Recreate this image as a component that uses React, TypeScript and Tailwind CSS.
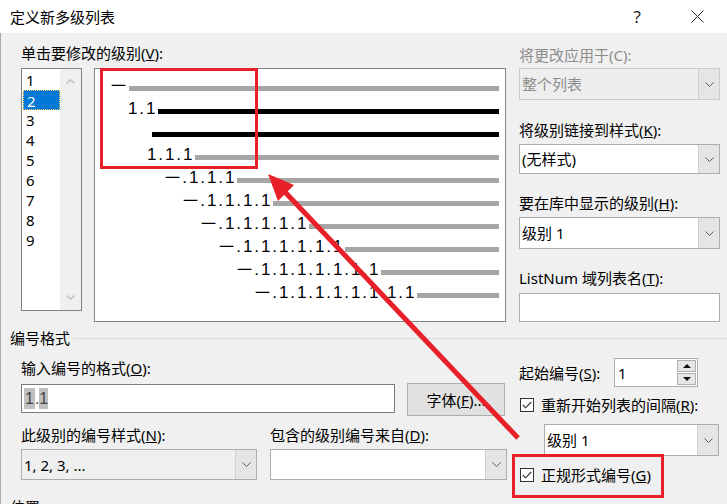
import React from "react";

const FONT = "font-['Noto_Sans','Noto_Sans_CJK_SC',sans-serif]";

// preview rows: left padding, label, bar colour
const previewRows = [
  { pl: "pl-[16px]", text: "一", bar: "bg-[#a6a6a6]" },
  { pl: "pl-[33px]", text: "1.1", bar: "bg-black" },
  { pl: "pl-[57px]", text: "", bar: "bg-black" },
  { pl: "pl-[52px]", text: "1.1.1", bar: "bg-[#a6a6a6]" },
  { pl: "pl-[70px]", text: "一.1.1.1", bar: "bg-[#a6a6a6]" },
  { pl: "pl-[88px]", text: "一.1.1.1.1", bar: "bg-[#a6a6a6]" },
  { pl: "pl-[106px]", text: "一.1.1.1.1.1", bar: "bg-[#a6a6a6]" },
  { pl: "pl-[124px]", text: "一.1.1.1.1.1.1", bar: "bg-[#a6a6a6]" },
  { pl: "pl-[142px]", text: "一.1.1.1.1.1.1.1", bar: "bg-[#a6a6a6]" },
  { pl: "pl-[160px]", text: "一.1.1.1.1.1.1.1.1", bar: "bg-[#a6a6a6]" },
];

function Chevron({ className = "stroke-[#5a5a5a]" }: { className?: string }) {
  return (
    <svg width="9" height="5" viewBox="0 0 9 5" className={className} fill="none">
      <polyline points="0.5,0.5 4.5,4.5 8.5,0.5" strokeWidth="1" />
    </svg>
  );
}

function Combo({
  value,
  disabled,
  white = true,
  className,
}: {
  value: string;
  disabled?: boolean;
  white?: boolean;
  className: string;
}) {
  return (
    <div
      className={`flex border ${disabled ? "border-[#cccccc] bg-[#eeeeee]" : "border-[#adadad]"} ${
        white ? "bg-white" : "bg-[#efefef]"
      } ${className}`}
    >
      <div
        className={`flex-1 flex items-center pl-[2px] text-[15px] ${
          disabled ? "text-[#8d8d8d] bg-[#eeeeee]" : "text-black"
        }`}
      >
        {value}
      </div>
      <div className="w-[21px] flex items-center justify-center bg-[#e5e5e5] border-l border-[#d0d0d0]">
        <Chevron />
      </div>
    </div>
  );
}

function CheckBox() {
  return (
    <div className="w-[14px] h-[14px] border border-[#333333] bg-white flex items-center justify-center">
      <svg width="10" height="8" viewBox="0 0 10 8" fill="none" className="stroke-[#333333]">
        <polyline points="0.8,4 3.6,6.8 9.2,1" strokeWidth="1.1" />
      </svg>
    </div>
  );
}

function PreviewText({ text }: { text: string }) {
  return (
    <span className="flex font-['Liberation_Sans','Noto_Sans_CJK_SC',sans-serif] text-[17px] leading-[17px] mb-[7px] text-black">
      {text.split("").map((c, i) => (
        <span
          key={i}
          className={c === "一" ? "inline-block w-[15px] text-[15px]" : "inline-block w-[9px] text-center"}
        >
          {c}
        </span>
      ))}
    </span>
  );
}

export default function App() {
  return (
    <div className={`relative w-[727px] h-[504px] overflow-hidden bg-[#f0f0f0] text-black ${FONT}`}>
      {/* Title bar */}
      <div className="h-[33px] bg-white flex items-center">
        <span className="pl-[10px] text-[15px] leading-[20px]">定义新多级列表</span>
        <span className="ml-auto mr-[50px] text-[17px] leading-[20px] text-[#222]">?</span>
        <svg width="13" height="13" viewBox="0 0 13 13" className="mr-[23px] stroke-[#222]" fill="none">
          <line x1="0.5" y1="0.5" x2="12.5" y2="12.5" strokeWidth="1" />
          <line x1="12.5" y1="0.5" x2="0.5" y2="12.5" strokeWidth="1" />
        </svg>
      </div>

      {/* Body */}
      <div className="h-[471px] border-l border-[#aaaaaa]">
        <div className="flex">
          {/* Level list + preview */}
          <div className="w-[506px] pl-[20px] pt-[10px]">
            <div className="text-[15px] leading-[20px]">
              单击要修改的级别(<u>V</u>):
            </div>
            <div className="flex mt-[5px] gap-[12px]">
              <div className="w-[61px] h-[243px] border border-[#828282] bg-white flex">
                <div className="flex-1 pt-[1px] pl-[1px]">
                  {["1", "2", "3", "4", "5", "6", "7", "8", "9"].map((n) => (
                    <div
                      key={n}
                      className={`h-[20px] leading-[20px] text-[15px] pl-[3px] ${
                        n === "2"
                          ? "bg-[#0078d7] text-white border border-dotted border-[#ffc864] leading-[18px] pl-[2px]"
                          : ""
                      }`}
                    >
                      {n}
                    </div>
                  ))}
                </div>
                <div className="w-[21px] bg-[#f0f0f0] flex flex-col items-center justify-between py-[10px]">
                  <svg width="9" height="5" viewBox="0 0 9 5" fill="none" className="stroke-[#c4c4c4]">
                    <polyline points="0.5,4.5 4.5,0.8 8.5,4.5" strokeWidth="1.6" />
                  </svg>
                  <svg width="9" height="5" viewBox="0 0 9 5" fill="none" className="stroke-[#c4c4c4]">
                    <polyline points="0.5,0.5 4.5,4.2 8.5,0.5" strokeWidth="1.6" />
                  </svg>
                </div>
              </div>
              <div className="w-[412px] h-[254px] border border-[#828282] bg-white pt-[8px] pr-[6px]">
                {previewRows.map((r, i) => (
                  <div key={i} className={`h-[23px] flex items-center ${r.pl}`}>
                    {r.text && <PreviewText text={r.text} />}
                    <div className={`flex-1 h-[5px] ${r.bar} ${r.text ? "ml-[3px]" : ""}`} />
                  </div>
                ))}
              </div>
            </div>
          </div>

          {/* Right column */}
          <div className="w-[201px] ml-[12px] pt-[12px] text-[15px] leading-[20px]">
            <div className="text-[#8d8d8d]">将更改应用于(C):</div>
            <Combo value="整个列表" disabled className="mt-[3px] h-[32px]" />
            <div className="mt-[20px]">
              将级别链接到样式(<u>K</u>):
            </div>
            <Combo value="(无样式)" className="mt-[4px] h-[30px]" />
            <div className="mt-[19px]">
              要在库中显示的级别(<u>H</u>):
            </div>
            <Combo value="级别 1" className="mt-[4px] h-[32px]" />
            <div className="mt-[19px]">
              ListNum 域列表名(<u>T</u>):
            </div>
            <div className="mt-[5px] h-[29px] border border-[#adadad] bg-white" />
          </div>
        </div>

        {/* Group header */}
        <div className="mt-[6px] h-[20px] flex items-center pl-[9px]">
          <span className="text-[15px] leading-[20px]">编号格式</span>
          <div className="flex-1 h-px bg-[#dcdcdc] ml-[3px]" />
        </div>

        <div className="flex">
          {/* Number format */}
          <div className="w-[506px] pl-[20px] text-[15px] leading-[20px]">
            <div className="mt-[10px]">
              输入编号的格式(<u>O</u>):
            </div>
            <div className="flex items-start mt-[5px]">
              <div className="mt-[1px] w-[374px] h-[29px] border border-[#7a7a7a] bg-white flex items-center pl-[2px] text-[16px] text-[#444] font-['Liberation_Sans',sans-serif]">
                <span className="bg-[#c0c0c0] leading-[21px] px-[1px]">1</span>
                <span className="leading-[21px]">.</span>
                <span className="bg-[#c0c0c0] leading-[21px]">1</span>
              </div>
              <div className="ml-[12px] w-[98px] h-[33px] border border-[#adadad] bg-[#e1e1e1] flex items-center justify-center">
                字体(<u>F</u>)...
              </div>
            </div>
            <div className="grid grid-cols-[236px_237px] gap-x-[13px] mt-[9px]">
              <div>
                此级别的编号样式(<u>N</u>):
              </div>
              <div>
                包含的级别编号来自(<u>D</u>):
              </div>
              <Combo value="1, 2, 3, ..." white={false} className="mt-[4px] h-[31px]" />
              <Combo value="" className="mt-[4px] h-[31px]" />
            </div>
            <div className="mt-[17px] -ml-[11px]">位置</div>
          </div>

          {/* Start / restart */}
          <div className="w-[201px] ml-[12px] text-[15px] leading-[20px]">
            <div className="mt-[10px] flex items-center h-[29px]">
              <span className="w-[95px]">
                起始编号(<u>S</u>):
              </span>
              <div className="w-[84px] h-[29px] border border-[#adadad] bg-white flex">
                <div className="flex-1 flex items-center pl-[3px]">1</div>
                <div className="w-[21px] flex flex-col p-[1px] gap-[1px]">
                  <div className="flex-1 bg-[#e6e6e6] border border-[#b0b0b0] flex items-center justify-center">
                    <svg width="8" height="4" viewBox="0 0 8 4">
                      <polygon points="0,4 4,0 8,4" fill="#111" />
                    </svg>
                  </div>
                  <div className="flex-1 bg-[#e6e6e6] border border-[#b0b0b0] flex items-center justify-center">
                    <svg width="8" height="4" viewBox="0 0 8 4">
                      <polygon points="0,0 8,0 4,4" fill="#111" />
                    </svg>
                  </div>
                </div>
              </div>
            </div>
            <div className="mt-[8px] h-[20px] flex items-center gap-[7px] pl-[1px]">
              <CheckBox />
              <span>
                重新开始列表的间隔(<u>R</u>):
              </span>
            </div>
            <Combo value="级别 1" className="mt-[9px] ml-[25px] w-[175px] h-[32px]" />
            <div className="mt-[9px] h-[20px] flex items-center gap-[7px] pl-[1px]">
              <CheckBox />
              <span>
                正规形式编号(<u>G</u>)
              </span>
            </div>
          </div>
        </div>
      </div>

      {/* Annotation overlays */}
      <div className="absolute left-[100px] top-[68px] w-[158px] h-[101px] border-[3px] border-[#e8202a] pointer-events-none" />
      <div className="absolute left-[512px] top-[454px] w-[152px] h-[44px] border-[3px] border-[#e8202a] pointer-events-none" />
      <svg className="absolute left-0 top-0 pointer-events-none" width="727" height="504" viewBox="0 0 727 504">
        <line x1="518" y1="438" x2="284" y2="191" stroke="#e8202a" strokeWidth="5" />
        <polygon points="268,174 294,185 278,201" fill="#e8202a" />
      </svg>
    </div>
  );
}
